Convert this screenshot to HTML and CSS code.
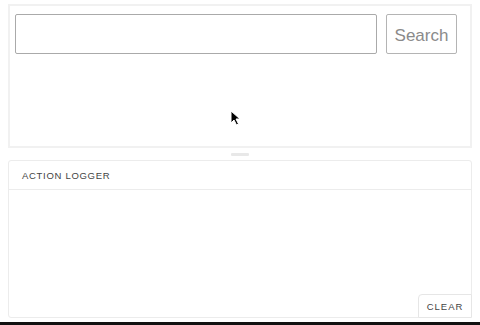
FILE: index.html
```html
<!DOCTYPE html>
<html lang="en">
<head>
<meta charset="utf-8">
<link rel="stylesheet" href="styles.css">
</head>
<body>
	<div class="preview">
		<div class="search_row">
			<input type="text" class="search_input">
			<button class="search_button">Search</button>
		</div>
		<svg class="cursor" width="12" height="16" viewBox="0 0 12 16">
			<path d="M1 1 L1 13 L4 10 L6.5 15 L8.5 14 L6 9 L10 9 Z" fill="#000" stroke="#fff" stroke-width="1"/>
		</svg>
	</div>

	<div class="handle_row"><div class="handle"></div></div>

	<div class="logger">
		<div class="logger_head">ACTION LOGGER</div>
		<div class="logger_body"></div>
		<button class="clear_button">CLEAR</button>
	</div>

	<div class="bottom_bar"></div>
</body>
</html>
```

FILE: styles.css
```css
body {
	margin: 0;
	padding: 4px 8px 0 8px;
	background: #fff;
	font-family: "Liberation Sans", Arial, sans-serif;
	height: 325px;
	box-sizing: border-box;
	overflow: hidden;
}

.preview {
	position: relative;
	height: 144px;
	box-sizing: border-box;
	border: 2px solid #f1f1f1;
	padding: 8px 13px 0 5px;
}

.search_row {
	display: flex;
	gap: 9px;
}

.search_input {
	width: 362px;
	height: 40px;
	box-sizing: border-box;
	margin: 0;
	border: 1px solid #aaa;
	border-radius: 2px;
	outline: none;
}

.search_button {
	width: 71px;
	height: 40px;
	margin: 0;
	box-sizing: border-box;
	border: 1px solid #b4b4b4;
	border-radius: 2px;
	background: #fff;
	color: #8a8a8a;
	font-family: "Liberation Sans", Arial, sans-serif;
	font-size: 17px;
	padding: 3px 0 0 0;
}

.cursor {
	position: absolute;
	left: 220px;
	top: 104px;
}

.handle_row {
	height: 12px;
	display: flex;
	align-items: center;
	justify-content: center;
}

.handle {
	width: 18px;
	height: 3px;
	background: #e8e8e8;
	border-radius: 1px;
}

.logger {
	height: 158px;
	box-sizing: border-box;
	border: 1px solid #ececec;
	border-radius: 3px;
	display: flex;
	flex-direction: column;
	position: relative;
}

.logger_head {
	height: 28px;
	line-height: 29px;
	padding-left: 13px;
	border-bottom: 1px solid #ececec;
	font-size: 9.5px;
	letter-spacing: 0.7px;
	color: #444;
}

.logger_body {
	flex: 1;
}

.clear_button {
	position: absolute;
	right: -1px;
	bottom: -1px;
	width: 54px;
	height: 24px;
	margin: 0;
	padding: 0;
	border: 1px solid #e6e6e6;
	border-radius: 4px 0 0 0;
	background: #fff;
	color: #444;
	font-family: "Liberation Sans", Arial, sans-serif;
	font-size: 9.5px;
	letter-spacing: 1px;
}

.bottom_bar {
	margin: 4px -8px 0 -8px;
	height: 3px;
	background: #111;
}
```
